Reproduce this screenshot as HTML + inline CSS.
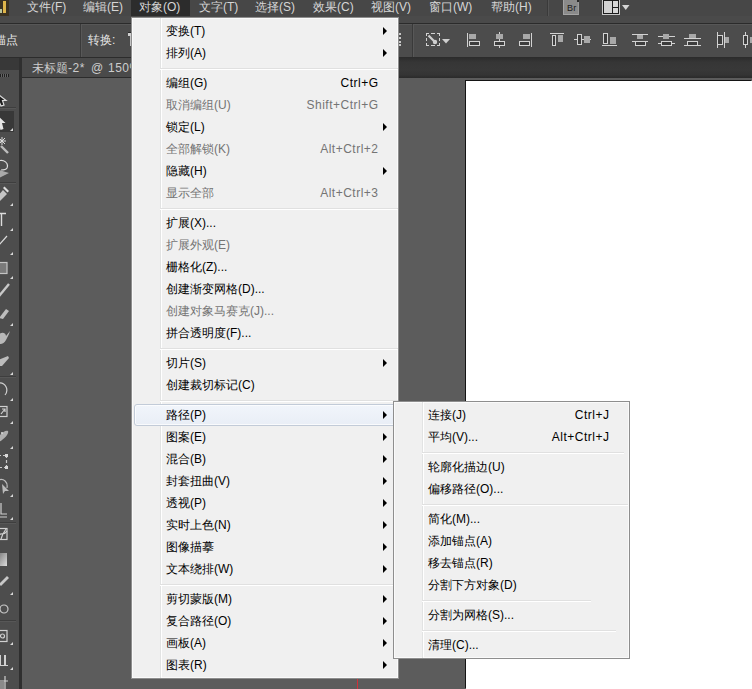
<!DOCTYPE html>
<html><head><meta charset="utf-8">
<style>
*{margin:0;padding:0;box-sizing:border-box}
html,body{width:752px;height:689px;overflow:hidden;background:#5b5b5b;font-family:"Liberation Sans",sans-serif;font-size:12px}
.abs{position:absolute}
#menubar{left:0;top:0;width:752px;height:16px;background:#474747}
.mi{position:absolute;top:0;height:16px;line-height:15px;color:#d6d6d6;font-size:12px;white-space:nowrap}
#band{left:0;top:16px;width:752px;height:7px;background:#4a4a4a}
#ctlline{left:0;top:23px;width:752px;height:1px;background:#2b2b2b}
#ctlbar{left:0;top:24px;width:752px;height:33px;background:#4c4c4c;border-top:1px solid #575757}
#ctlbot{left:0;top:57px;width:752px;height:1px;background:#2e2e2e}
#tabbar{left:0;top:57px;width:752px;height:21px;background:linear-gradient(#2b2b2b,#363636 25%,#383838 60%,#343434 85%,#2a2a2a)}
#tab{left:22px;top:58px;width:200px;height:19px;background:#4a4a4a}
#canvas{left:22px;top:78px;width:730px;height:611px;background:#5c5c5c}
#tbgap{left:19px;top:58px;width:3px;height:631px;background:#2f2f2f}
#toolhead{left:0;top:58px;width:19px;height:12px;background:#383838}
#toolbar{left:0;top:70px;width:19px;height:619px;background:#4d4d4d}
#artboard{left:466px;top:81px;width:286px;height:608px;background:#fff;box-shadow:-1px -1px 0 #141414}
.menu{position:absolute;background:#f0f0f0;border:1px solid #8e8e8e;box-shadow:inset 0 0 0 1px #fafafa}
.menu .gut{position:absolute;top:0;bottom:0;width:1px;background:#e2e3e3;border-right:1px solid #fff;box-sizing:content-box}
.menu .it{position:absolute;height:22px;line-height:22px;color:#000;white-space:nowrap;font-size:12px}
.menu .it b{font-weight:normal;-webkit-text-stroke:0}
.menu .dis{color:#747474}
.menu .sc{position:absolute;height:22px;line-height:22px;white-space:nowrap;text-align:right;font-size:12px;letter-spacing:0.5px;margin-right:-0.5px}
.menu .sep{position:absolute;height:2px;border-top:1px solid #e0e0e0;border-bottom:1px solid #fff}
.menu .arr{position:absolute;width:0;height:0;border-top:4px solid transparent;border-bottom:4px solid transparent;border-left:4px solid #000}
.hl{position:absolute;border:1px solid #c2cbd8;border-radius:3px;background:linear-gradient(#f1f5fb,#e9eef6);box-shadow:inset 0 0 0 1px rgba(255,255,255,.7)}
.ctxt{position:absolute;color:#e6e6e6;font-size:12px;white-space:nowrap;line-height:14px}
svg{position:absolute;overflow:visible}
</style></head><body>
<div id="menubar" class="abs">
  <div class="abs" style="left:0;top:0;width:9px;height:16px;background:#3b3222"></div>
  <div class="abs" style="left:0;top:9px;width:2px;height:4px;background:#b9c49a"></div>
  <div class="abs" style="left:3px;top:1px;width:3px;height:12px;background:#e0b64a"></div>
  <div class="mi" style="left:27px">文件(F)</div>
  <div class="mi" style="left:83px">编辑(E)</div>
  <div class="abs" style="left:131px;top:0;width:59px;height:16px;background:#2c2c2c"></div>
  <div class="mi" style="left:139px">对象(O)</div>
  <div class="mi" style="left:199px">文字(T)</div>
  <div class="mi" style="left:255px">选择(S)</div>
  <div class="mi" style="left:313px">效果(C)</div>
  <div class="mi" style="left:371px">视图(V)</div>
  <div class="mi" style="left:429px">窗口(W)</div>
  <div class="mi" style="left:491px">帮助(H)</div>
  <div class="abs" style="left:547px;top:0;width:1px;height:16px;background:#3a3a3a;border-right:1px solid #555;box-sizing:content-box"></div>
  <div class="abs" style="left:563px;top:0;width:16px;height:15px;background:#8a8a8a;border-left:1px solid #a4a4a4;border-bottom:1px solid #a4a4a4;border-right:1px solid #9a9a9a"></div>
  <div class="abs" style="left:577px;top:0;width:2px;height:2px;background:#2a2a2a"></div>
  <div class="abs" style="left:567px;top:3px;font-size:9px;color:#1a1a1a;letter-spacing:0.3px;font-family:'Liberation Sans',sans-serif;line-height:10px">Br</div>
  <svg style="left:0;top:0" width="752" height="16" shape-rendering="crispEdges">
    <rect x="602" y="0" width="18" height="15" fill="#c8c8c8"/>
    <rect x="603" y="0" width="16" height="14" fill="#1c1c1c"/>
    <rect x="604" y="1" width="8" height="12" fill="#d2d2d2"/>
    <rect x="613" y="1" width="5" height="6" fill="#d6d6d6"/>
    <rect x="613" y="8" width="5" height="5" fill="#d6d6d6"/>
    <path d="M622 5 L629.5 5 L625.75 10 Z" fill="#d4d4d4" shape-rendering="auto"/>
  </svg>
</div>
<div id="band" class="abs"></div>
<div id="ctlline" class="abs"></div>
<div id="ctlbar" class="abs"></div>
<div id="ctlbot" class="abs"></div>
<div class="ctxt" style="left:-6px;top:33px">锚点</div>
<div class="abs" style="left:80px;top:24px;width:1px;height:33px;background:#3a3a3a;border-right:1px solid #585858;box-sizing:content-box"></div>
<div class="ctxt" style="left:88px;top:33px">转换</div><div class="ctxt" style="left:112px;top:33px">:</div>
<div class="abs" style="left:128px;top:33px;width:3px;height:3px;background:#cfcfcf"></div><div class="abs" style="left:130px;top:36px;width:1px;height:10px;background:#c4c4c4"></div><div class="abs" style="left:128px;top:32px;width:3px;height:1px;background:#2a2a2a"></div>
<div class="abs" style="left:412px;top:24px;width:1px;height:33px;background:#3a3a3a;border-right:1px solid #585858;box-sizing:content-box"></div>
<svg style="left:0;top:0" width="752" height="60" shape-rendering="crispEdges">
<rect x="399" y="33" width="2" height="2" fill="#c8c8c8"/><rect x="399" y="37" width="2" height="2" fill="#c8c8c8"/><rect x="399" y="41" width="2" height="2" fill="#c8c8c8"/><rect x="399" y="44" width="2" height="2" fill="#c8c8c8"/>
<rect x="426" y="33" width="3" height="1" fill="#d2d2d2"/>
<rect x="426" y="45" width="3" height="1" fill="#d2d2d2"/>
<rect x="431" y="33" width="4" height="1" fill="#d2d2d2"/>
<rect x="431" y="45" width="4" height="1" fill="#d2d2d2"/>
<rect x="437" y="33" width="3" height="1" fill="#d2d2d2"/>
<rect x="437" y="45" width="3" height="1" fill="#d2d2d2"/>
<rect x="426" y="33" width="1" height="3" fill="#d2d2d2"/>
<rect x="439" y="33" width="1" height="3" fill="#d2d2d2"/>
<rect x="426" y="38" width="1" height="3" fill="#d2d2d2"/>
<rect x="439" y="38" width="1" height="3" fill="#d2d2d2"/>
<rect x="426" y="43" width="1" height="3" fill="#d2d2d2"/>
<rect x="439" y="43" width="1" height="3" fill="#d2d2d2"/>
<path d="M428.5 35.5 L435 42" stroke="#cfcfcf" stroke-width="2.2" shape-rendering="auto"/><circle cx="435" cy="42" r="2.2" fill="#cfcfcf" shape-rendering="auto"/>
<path d="M442 39h8l-4 4.5z" fill="#cfcfcf" shape-rendering="auto"/>
<rect x="467" y="33" width="1" height="14" fill="#d2d2d2"/>
<rect x="469" y="34" width="7" height="5" fill="#a8a8a8"/>
<rect x="469" y="41" width="11" height="5" fill="#d2d2d2"/><rect x="470" y="42" width="9" height="3" fill="#3d3d3d"/>
<rect x="499" y="32" width="1" height="16" fill="#d2d2d2"/>
<rect x="494" y="41" width="11" height="5" fill="#d2d2d2"/><rect x="495" y="42" width="9" height="3" fill="#3d3d3d"/>
<rect x="496" y="34" width="7" height="5" fill="#a8a8a8"/>
<rect x="499" y="41" width="1" height="1" fill="#d2d2d2"/>
<rect x="499" y="45" width="1" height="1" fill="#d2d2d2"/>
<rect x="531" y="33" width="1" height="14" fill="#d2d2d2"/>
<rect x="523" y="34" width="7" height="5" fill="#a8a8a8"/>
<rect x="519" y="41" width="11" height="5" fill="#d2d2d2"/><rect x="520" y="42" width="9" height="3" fill="#3d3d3d"/>
<rect x="550" y="33" width="14" height="1" fill="#d2d2d2"/>
<rect x="552" y="35" width="4" height="11" fill="#d2d2d2"/><rect x="553" y="36" width="2" height="9" fill="#3d3d3d"/>
<rect x="558" y="35" width="5" height="7" fill="#a8a8a8"/>
<rect x="574" y="39" width="17" height="1" fill="#d2d2d2"/>
<rect x="577" y="34" width="5" height="11" fill="#d2d2d2"/><rect x="578" y="35" width="3" height="9" fill="#3d3d3d"/>
<rect x="584" y="36" width="6" height="7" fill="#a8a8a8"/>
<rect x="602" y="45" width="15" height="1" fill="#d2d2d2"/>
<rect x="603" y="33" width="5" height="11" fill="#d2d2d2"/><rect x="604" y="34" width="3" height="9" fill="#3d3d3d"/>
<rect x="610" y="37" width="6" height="7" fill="#a8a8a8"/>
<rect x="632" y="34" width="16" height="1" fill="#d2d2d2"/>
<rect x="637" y="35" width="6" height="4" fill="#a8a8a8"/>
<rect x="632" y="41" width="16" height="1" fill="#d2d2d2"/>
<rect x="635" y="41" width="11" height="5" fill="#d2d2d2"/><rect x="636" y="42" width="9" height="3" fill="#3d3d3d"/>
<rect x="658" y="36" width="17" height="1" fill="#d2d2d2"/>
<rect x="663" y="34" width="6" height="5" fill="#a8a8a8"/>
<rect x="658" y="43" width="17" height="1" fill="#d2d2d2"/>
<rect x="661" y="41" width="11" height="5" fill="#d2d2d2"/><rect x="662" y="42" width="9" height="3" fill="#3d3d3d"/>
<rect x="689" y="34" width="7" height="5" fill="#a8a8a8"/>
<rect x="684" y="38" width="17" height="1" fill="#d2d2d2"/>
<rect x="687" y="41" width="11" height="5" fill="#d2d2d2"/><rect x="688" y="42" width="9" height="3" fill="#3d3d3d"/>
<rect x="684" y="45" width="17" height="1" fill="#d2d2d2"/>
<rect x="717" y="32" width="1" height="16" fill="#d2d2d2"/>
<rect x="717" y="35" width="6" height="10" fill="#d2d2d2"/><rect x="718" y="36" width="4" height="8" fill="#3d3d3d"/>
<rect x="724" y="32" width="1" height="16" fill="#d2d2d2"/>
<rect x="725" y="37" width="4" height="6" fill="#a8a8a8"/>
<rect x="743" y="35" width="5" height="10" fill="#d2d2d2"/><rect x="744" y="36" width="3" height="8" fill="#3d3d3d"/>
<rect x="745" y="32" width="1" height="3" fill="#d2d2d2"/>
<rect x="745" y="45" width="1" height="3" fill="#d2d2d2"/>
<rect x="750" y="37" width="3" height="6" fill="#a8a8a8"/>
</svg>
<div id="tabbar" class="abs"></div>
<div id="tab" class="abs"></div>
<div class="abs" style="left:32px;top:60px;color:#cdcdcd;font-size:12px;white-space:nowrap;line-height:16px">未标题</div>
<div class="abs" style="left:68px;top:60px;color:#cdcdcd;font-size:12px;white-space:nowrap;line-height:16px;letter-spacing:0.6px">-2*</div>
<div class="abs" style="left:91px;top:60px;color:#cdcdcd;font-size:12px;white-space:nowrap;line-height:16px">@</div>
<div class="abs" style="left:108px;top:60px;color:#cdcdcd;font-size:12px;white-space:nowrap;line-height:16px;letter-spacing:0.5px">150%</div>
<div id="canvas" class="abs"></div>
<div id="tbgap" class="abs"></div>
<div id="toolhead" class="abs"></div>
<div id="toolbar" class="abs"></div>
<svg style="left:0;top:0" width="20" height="689">
  <!-- header dots -->
  <g fill="#1f1f1f"><rect x="0" y="74" width="1" height="3"/><rect x="2" y="74" width="1" height="3"/><rect x="4" y="74" width="1" height="3"/><rect x="6" y="74" width="1" height="3"/><rect x="8" y="74" width="1" height="3"/></g>
  <g fill="#666"><rect x="1" y="74" width="1" height="3"/><rect x="3" y="74" width="1" height="3"/><rect x="5" y="74" width="1" height="3"/><rect x="7" y="74" width="1" height="3"/></g>
  <!-- separators -->
  <g fill="#3e3e3e">
    <rect x="0" y="107" width="16" height="1"/>
    <rect x="0" y="182" width="16" height="1"/>
    <rect x="0" y="376" width="16" height="1"/>
    <rect x="0" y="522" width="16" height="1"/>
    <rect x="0" y="620" width="16" height="1"/>
  </g>
  <g fill="#575757">
    <rect x="0" y="108" width="16" height="1"/>
    <rect x="0" y="183" width="16" height="1"/>
    <rect x="0" y="377" width="16" height="1"/>
    <rect x="0" y="523" width="16" height="1"/>
    <rect x="0" y="621" width="16" height="1"/>
  </g>
  <!-- selected box -->
  <rect x="0" y="111" width="14" height="21" fill="#383838"/>
  <!-- corner triangles -->
  <g fill="#d8d8d8">
    <path d="M13 128v3h-3z"/>
    <path d="M13 203v3h-3z"/>
    <path d="M13 228v3h-3z"/>
    <path d="M13 252v3h-3z"/>
    <path d="M13 276v3h-3z"/>
    <path d="M13 323v3h-3z"/>
    <path d="M13 372v3h-3z"/>
    <path d="M13 398v3h-3z"/>
    <path d="M13 421v3h-3z"/>
    <path d="M13 446v3h-3z"/>
    <path d="M13 494v3h-3z"/>
    <path d="M13 517v3h-3z"/>
    <path d="M13 592v3h-3z"/>
    <path d="M13 642v3h-3z"/>
    <path d="M13 667v3h-3z"/>
  </g>
  <g fill="none" stroke="#dcdcdc" stroke-width="1.2">
    <!-- selection outline arrow -->
    <path d="M-4 92.5 L6 100.5 L2.5 100.5 L4 105 L1 106 L-1 101.5 L-4 104 Z" fill="#1e1e1e"/>
    <!-- magic wand -->
    <path d="M1 146 L8 153" stroke-width="2.4" stroke="#bdbdbd"/>
    <path d="M2 137v8M-2 141h8M-1 138l6 6M5 138l-6 6" stroke-width="1"/>
    <!-- lasso -->
    <path d="M-2 161 C4 159 9 163 7 168 C6 170 3 170 1 170"/>
    <!-- type T -->
    <path d="M-3 213.5h9M1.5 213v13" stroke-width="1.4"/>
    <!-- line -->
    <path d="M-1 245 L7 236"/>
    <!-- rect outline -->
    <rect x="-3" y="262.5" width="10" height="11" stroke="#c4c4c4" fill="#7a7a7a"/>
    <!-- paintbrush -->
    <path d="M-1 296 L9 284" stroke-width="2.4" stroke="#c8c8c8"/>
    <!-- rotate -->
    <path d="M-2 383 C6 382 9 390 5 395" stroke="#d0d0d0"/>
    <!-- scale box -->
    <rect x="-2" y="406.5" width="9" height="10" stroke="#d0d0d0"/>
    <path d="M1 414 L5 409M2 409h3v3" stroke="#d0d0d0"/>
    <!-- free transform dashed -->
    <path d="M-2 455.5h9M6.5 455v13M7 467.5h-9" stroke="#c8c8c8" stroke-dasharray="3 2"/><rect x="5" y="454" width="3" height="3" fill="#d8d8d8" stroke="none"/><rect x="5" y="466" width="3" height="3" fill="#d8d8d8" stroke="none"/>
    <!-- shape builder arc -->
    <path d="M-2 480 C4 478 8 482 7 488" stroke="#bdbdbd"/>
    <!-- perspective L -->
    <path d="M1 503v11h6M-2 517h9" stroke="#d0d0d0"/>
    <!-- mesh -->
    <rect x="-2" y="528.5" width="9" height="11" stroke="#d0d0d0"/>
    <path d="M-1 535 C2 532 4 536 7 531M1 539 C2 535 3 533 6 529" stroke="#d0d0d0"/>
    <!-- blend circles -->
    <circle cx="4" cy="609" r="4" stroke="#c8c8c8"/>
    <!-- symbol sprayer -->
    <rect x="-2" y="630.5" width="9" height="11" stroke="#d0d0d0"/>
    <circle cx="2.5" cy="636" r="2" stroke="#d0d0d0"/>
    <!-- artboard -->
    <path d="M5 676v13M-2 681h10" stroke="#d0d0d0"/>
  </g>
  <g fill="#d0d0d0">
    <!-- direct selection arrow filled -->
    <path d="M-3 115 L5.5 123 L2 123 L3.5 129 L0.5 130 L-1 125 L-3 127 Z" fill="#e4e4e4"/>
    <!-- lasso fill -->
    <path d="M-1 170 L9 173 L-1 178 Z" fill="#aaa"/>
    <!-- pen -->
    <path d="M-3 197 L3 190 L7 194 L0 201 Z" fill="#c4c4c4"/><path d="M4.5 186.5 L9 191 L7.5 192.5 L3 188 Z" fill="#dedede"/>
    <!-- blob brush -->
    <path d="M-1 318 L6 309 L9 311 L3 319 Z" fill="#bdbdbd"/>
    <!-- shaper -->
    <path d="M-2 335 C2 331 6 333 6 336 L10 331 L9 334 L6 340 C4 344 0 345 -2 343 Z" fill="#b8b8b8"/>
    <!-- eraser -->
    <path d="M-2 360 L8 356 L9 358 L2 366 L-2 366 Z" fill="#bcbcbc"/>
    <!-- warp -->
    <path d="M-2 437 C2 433 5 430 8 431 C9 433 6 437 2 440 C0 442 -1 441 -2 441 Z" fill="#b0b0b0"/>
    <circle cx="2" cy="433" r="1" fill="#ddd"/>
    <!-- shape builder arrow -->
    <path d="M2 484 L9 491 L5 491 L3 494 Z" fill="#bbb"/>
    <!-- gradient -->
    <defs><linearGradient id="gr" x1="0" y1="0" x2="1" y2="1"><stop offset="0" stop-color="#7a7a7a"/><stop offset="1" stop-color="#dcdcdc"/></linearGradient></defs><rect x="-2" y="553" width="9" height="13" fill="url(#gr)"/>
    <!-- eyedropper -->
    <path d="M-1 584 L5 578 L7 576 L9 578 L7 580 L1 586 Z" fill="#c8c8c8"/>
    <!-- graph bars -->
    <rect x="-1" y="655" width="2" height="10"/>
    <rect x="4" y="655" width="2" height="10"/>
    <rect x="-2" y="665" width="10" height="1"/>
    <!-- artboard fill -->
    <rect x="-2" y="681" width="6" height="8" fill="#8a8a8a"/>
  </g>
</svg>

<div id="artboard" class="abs"></div>
<div class="abs" style="left:357px;top:678px;width:1px;height:11px;background:#d0303a"></div>

<!-- main menu -->
<div class="menu" style="left:131px;top:17px;width:268px;height:662px">
  <div class="gut" style="left:28px"></div>
<div class="it" style="left:34px;top:2px"><b>变换</b>(T)</div>
<div class="arr" style="left:251px;top:9px"></div>
<div class="it" style="left:34px;top:24px"><b>排列</b>(A)</div>
<div class="arr" style="left:251px;top:31px"></div>
<div class="sep" style="left:28px;width:238px;top:50px"></div>
<div class="it" style="left:34px;top:54px"><b>编组</b>(G)</div>
<div class="sc" style="right:20px;top:54px">Ctrl+G</div>
<div class="it dis" style="left:34px;top:76px"><b>取消编组</b>(U)</div>
<div class="sc dis" style="right:20px;top:76px">Shift+Ctrl+G</div>
<div class="it" style="left:34px;top:98px"><b>锁定</b>(L)</div>
<div class="arr" style="left:251px;top:105px"></div>
<div class="it dis" style="left:34px;top:120px"><b>全部解锁</b>(K)</div>
<div class="sc dis" style="right:20px;top:120px">Alt+Ctrl+2</div>
<div class="it" style="left:34px;top:142px"><b>隐藏</b>(H)</div>
<div class="arr" style="left:251px;top:149px"></div>
<div class="it dis" style="left:34px;top:164px"><b>显示全部</b></div>
<div class="sc dis" style="right:20px;top:164px">Alt+Ctrl+3</div>
<div class="sep" style="left:28px;width:238px;top:190px"></div>
<div class="it" style="left:34px;top:194px"><b>扩展</b>(X)...</div>
<div class="it dis" style="left:34px;top:216px"><b>扩展外观</b>(E)</div>
<div class="it" style="left:34px;top:238px"><b>栅格化</b>(Z)...</div>
<div class="it" style="left:34px;top:260px"><b>创建渐变网格</b>(D)...</div>
<div class="it dis" style="left:34px;top:282px"><b>创建对象马赛克</b>(J)...</div>
<div class="it" style="left:34px;top:304px"><b>拼合透明度</b>(F)...</div>
<div class="sep" style="left:28px;width:238px;top:330px"></div>
<div class="it" style="left:34px;top:334px"><b>切片</b>(S)</div>
<div class="arr" style="left:251px;top:341px"></div>
<div class="it" style="left:34px;top:356px"><b>创建裁切标记</b>(C)</div>
<div class="sep" style="left:28px;width:238px;top:382px"></div>
<div class="hl" style="left:2px;right:2px;top:386px;height:22px"></div>
<div class="it" style="left:34px;top:386px"><b>路径</b>(P)</div>
<div class="arr" style="left:251px;top:393px"></div>
<div class="it" style="left:34px;top:408px"><b>图案</b>(E)</div>
<div class="arr" style="left:251px;top:415px"></div>
<div class="it" style="left:34px;top:430px"><b>混合</b>(B)</div>
<div class="arr" style="left:251px;top:437px"></div>
<div class="it" style="left:34px;top:452px"><b>封套扭曲</b>(V)</div>
<div class="arr" style="left:251px;top:459px"></div>
<div class="it" style="left:34px;top:474px"><b>透视</b>(P)</div>
<div class="arr" style="left:251px;top:481px"></div>
<div class="it" style="left:34px;top:496px"><b>实时上色</b>(N)</div>
<div class="arr" style="left:251px;top:503px"></div>
<div class="it" style="left:34px;top:518px"><b>图像描摹</b></div>
<div class="arr" style="left:251px;top:525px"></div>
<div class="it" style="left:34px;top:540px"><b>文本绕排</b>(W)</div>
<div class="arr" style="left:251px;top:547px"></div>
<div class="sep" style="left:28px;width:238px;top:566px"></div>
<div class="it" style="left:34px;top:570px"><b>剪切蒙版</b>(M)</div>
<div class="arr" style="left:251px;top:577px"></div>
<div class="it" style="left:34px;top:592px"><b>复合路径</b>(O)</div>
<div class="arr" style="left:251px;top:599px"></div>
<div class="it" style="left:34px;top:614px"><b>画板</b>(A)</div>
<div class="arr" style="left:251px;top:621px"></div>
<div class="it" style="left:34px;top:636px"><b>图表</b>(R)</div>
<div class="arr" style="left:251px;top:643px"></div>
</div>

<!-- submenu -->
<div class="menu" style="left:393px;top:401px;width:237px;height:258px">
  <div class="gut" style="left:28px"></div>
<div class="it" style="left:34px;top:2px"><b>连接</b>(J)</div>
<div class="sc" style="right:20px;top:2px">Ctrl+J</div>
<div class="it" style="left:34px;top:24px"><b>平均</b>(V)...</div>
<div class="sc" style="right:20px;top:24px">Alt+Ctrl+J</div>
<div class="sep" style="left:28px;width:202px;top:50px"></div>
<div class="it" style="left:34px;top:54px"><b>轮廓化描边</b>(U)</div>
<div class="it" style="left:34px;top:76px"><b>偏移路径</b>(O)...</div>
<div class="sep" style="left:28px;width:206px;top:102px"></div>
<div class="it" style="left:34px;top:106px"><b>简化</b>(M)...</div>
<div class="it" style="left:34px;top:128px"><b>添加锚点</b>(A)</div>
<div class="it" style="left:34px;top:150px"><b>移去锚点</b>(R)</div>
<div class="it" style="left:34px;top:172px"><b>分割下方对象</b>(D)</div>
<div class="sep" style="left:28px;width:169px;top:198px"></div>
<div class="it" style="left:34px;top:202px"><b>分割为网格</b>(S)...</div>
<div class="sep" style="left:28px;width:194px;top:228px"></div>
<div class="it" style="left:34px;top:232px"><b>清理</b>(C)...</div>
</div>
</body></html>
